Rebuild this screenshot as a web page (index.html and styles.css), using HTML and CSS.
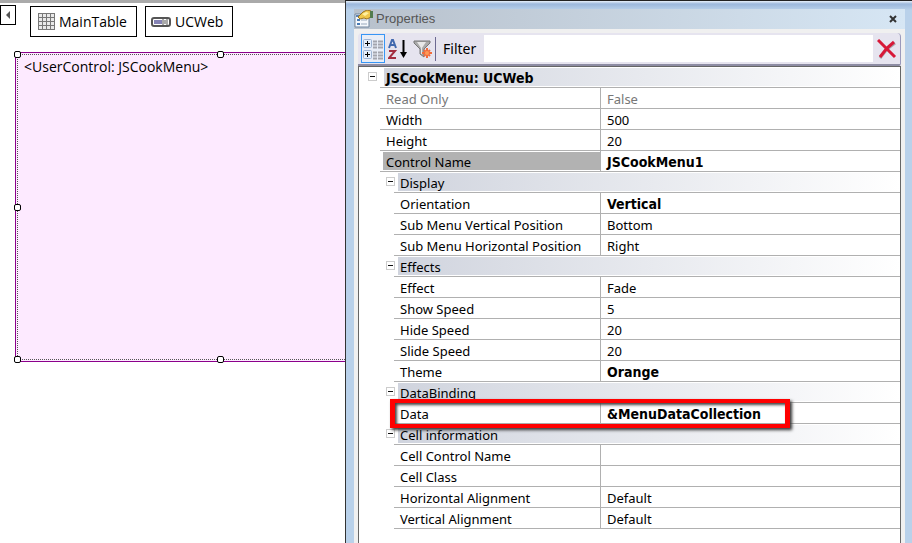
FILE: index.html
```html
<!DOCTYPE html>
<html lang="en">
<head>
<meta charset="utf-8">
<title>Properties</title>
<link rel="stylesheet" href="styles.css">
</head>
<body>
<main class="workspace">
  <section class="designer" aria-label="Form designer">
    <nav class="path">
      <button class="scroll" aria-label="Scroll left"><svg width="6" height="8" viewBox="0 0 6 8"><path d="M5 0v8L1 4z" fill="#555"/></svg></button>
      <button class="crumb">
        <svg width="17" height="17" viewBox="0 0 17 17"><path d="M0 0h17v17H0z" fill="#777"/><path d="M1 1h3v3H1zM5 1h3v3H5zM9 1h3v3H9zM13 1h3v3h-3zM1 5h3v3H1zM5 5h3v3H5zM9 5h3v3H9zM13 5h3v3h-3zM1 9h3v3H1zM5 9h3v3H5zM9 9h3v3H9zM13 9h3v3h-3zM1 13h3v3H1zM5 13h3v3H5zM9 13h3v3H9zM13 13h3v3h-3z" fill="#e9e9e9"/></svg>
        MainTable
      </button>
      <button class="crumb short">
        <svg width="20" height="10" viewBox="0 0 20 10"><rect x="1" y="1" width="18" height="8" rx="2" fill="#fff" stroke="#555" stroke-width="2"/><path d="M3 3h8v4H3z" fill="#8583b5"/><path d="M12 1v8M16 1v8" stroke="#555"/><path d="M13 3h2v4h-2z" fill="#aaa"/></svg>
        UCWeb
      </button>
    </nav>
    <div class="control">
      <div class="control-body">&lt;UserControl: JSCookMenu&gt;</div>
      <i class="handle tl"></i><i class="handle tc"></i><i class="handle ml"></i><i class="handle bl"></i><i class="handle bc"></i>
    </div>
  </section>

  <section class="window" aria-label="Properties">
    <div class="pane">
      <header class="title">
        <svg width="20" height="18" viewBox="0 0 20 18"><path d="M1 4h14v13H1z" fill="#f5f8fc" stroke="#71869f"/><path d="M2 5h8v2H2z" fill="#5982b8"/><path d="M3 9h3v2H3zM3 13h3v2H3z" fill="#497bb4"/><path d="M7 10h6M7 14h6" stroke="#99a9bc"/><path d="M4 7l5-5 4-2 4 1v6l-4 2-3-1-4 1z" fill="#efc74b" stroke="#9b7420"/><path d="M8 4l4-2 3 1-4 3z" fill="#fff0a0"/><path d="M16 1h3v7h-3z" fill="#527c4e"/></svg>
        <h1>Properties</h1>
        <button class="close" aria-label="Close"><svg width="8" height="8" viewBox="0 0 8 8"><path d="M1 1l6 6M7 1L1 7" stroke="#333" stroke-width="2"/></svg></button>
      </header>
      <div class="toolbar">
        <button class="tool active" aria-label="Categorized"><svg width="20" height="22" viewBox="0 0 20 22"><g fill="#e4eefb" stroke="#9db3d3"><rect x=".5" y="1.500" width="8" height="8" rx="1"/><rect x=".5" y="12.500" width="8" height="8" rx="1"/></g><path d="M2 5.500h5M4.500 3v5M2 16.500h5M4.500 14v5" stroke="#000"/><path d="M4 5h1v1H4zM4 16h1v1H4z" stroke="#000"/><path d="M10 3.500h4M10 6.500h4M10 9.500h4M10 14.500h4M10 17.500h4M10 20.500h4M15 3.500h5M15 6.500h5M15 9.500h5M15 14.500h5M15 17.500h5M15 20.500h5" stroke="#a3a5ae" stroke-width="2"/></svg></button>
        <button class="tool" aria-label="Alphabetical"><svg width="20" height="22" viewBox="0 0 20 22"><path d="M1 10L4 2h1l3 8M2 7h5" fill="none" stroke="#4169ae" stroke-width="2"/><path d="M1 13h6L1 20h7" fill="none" stroke="#a32e40" stroke-width="2"/><path d="M15.500 2v14" stroke="#000" stroke-width="2"/><path d="M12 14h7l-3.500 6z"/></svg></button>
        <button class="tool" aria-label="Filter modified"><svg width="20" height="20" viewBox="0 0 20 20"><path d="M1 2h16v2l-6 6v8l-4-3v-5L1 4z" fill="#aaa" stroke="#777"/><path d="M4 3h9L9 9v6H8V9z" fill="#e8e8e8"/><path d="M14 9v10M9 14h10M11 11l6 6M17 11l-6 6" stroke="#f36b3b" stroke-width="2"/><circle cx="14" cy="14" r="2" fill="#ff9a57"/></svg></button>
        <label for="filter">Filter</label>
        <input id="filter" type="text">
        <button class="clear" aria-label="Clear filter"><svg width="20" height="20" viewBox="0 0 20 20"><path d="M3 19L10 10 18 4" fill="none" stroke="#a9a5ad" stroke-width="3"/><path d="M1 1l7 7 10 10M17 3l-7 6-7 9" fill="none" stroke="#d71838" stroke-width="3"/></svg></button>
      </div>
      <div class="grid">
        <table>
          <colgroup><col class="gutter"><col class="indent"><col class="name"><col></colgroup>
          <tbody>
          <tr class="root"><td><button class="toggle" aria-label="Collapse"></button></td><th colspan="3"><div>JSCookMenu: UCWeb</div></th></tr>
          <tr class="top muted"><td></td><th colspan="2">Read Only</th><td>False</td></tr>
          <tr class="top"><td></td><th colspan="2">Width</th><td>500</td></tr>
          <tr class="top"><td></td><th colspan="2">Height</th><td>20</td></tr>
          <tr class="top selected"><td></td><th colspan="2"><div>Control Name</div></th><td class="changed">JSCookMenu1</td></tr>
          <tr class="group"><td></td><td><button class="toggle" aria-label="Collapse"></button></td><th colspan="2"><div>Display</div></th></tr>
          <tr><td></td><td></td><th>Orientation</th><td class="changed">Vertical</td></tr>
          <tr><td></td><td></td><th>Sub Menu Vertical Position</th><td>Bottom</td></tr>
          <tr><td></td><td></td><th>Sub Menu Horizontal Position</th><td>Right</td></tr>
          <tr class="group"><td></td><td><button class="toggle" aria-label="Collapse"></button></td><th colspan="2"><div>Effects</div></th></tr>
          <tr><td></td><td></td><th>Effect</th><td>Fade</td></tr>
          <tr><td></td><td></td><th>Show Speed</th><td>5</td></tr>
          <tr><td></td><td></td><th>Hide Speed</th><td>20</td></tr>
          <tr><td></td><td></td><th>Slide Speed</th><td>20</td></tr>
          <tr><td></td><td></td><th>Theme</th><td class="changed">Orange</td></tr>
          <tr class="group"><td></td><td><button class="toggle" aria-label="Collapse"></button></td><th colspan="2"><div>DataBinding</div></th></tr>
          <tr><td></td><td></td><th class="marked">Data<span class="callout"></span></th><td class="changed">&amp;MenuDataCollection</td></tr>
          <tr class="group"><td></td><td><button class="toggle" aria-label="Collapse"></button></td><th colspan="2"><div>Cell information</div></th></tr>
          <tr><td></td><td></td><th>Cell Control Name</th><td></td></tr>
          <tr><td></td><td></td><th>Cell Class</th><td></td></tr>
          <tr><td></td><td></td><th>Horizontal Alignment</th><td>Default</td></tr>
          <tr><td></td><td></td><th>Vertical Alignment</th><td>Default</td></tr>
          </tbody>
        </table>
      </div>
    </div>
  </section>
</main>
</body>
</html>
```
FILE: styles.css
```css
* { box-sizing: border-box; }
body { margin: 0; background: #fff; color: #000; font: 13px/18px "Noto Sans", "Open Sans", sans-serif; }
button { margin: 0; padding: 0; border: 0; background: none; color: inherit; font: inherit; }
svg { display: block; flex: none; }

.workspace { display: grid; grid-template-columns: 345px 1fr; min-height: 100vh; }

.designer { border-top: 3px solid #aaa; font: 14px/20px "Open Sans", "Noto Sans", sans-serif; overflow: hidden; }
.path { display: flex; align-items: flex-start; padding-top: 2px; }
.scroll { width: 16px; height: 20px; border: 1px solid #000; margin-right: 14px; display: flex; align-items: center; justify-content: center; }
.crumb { display: flex; align-items: center; gap: 4px; height: 31px; margin: 1px 8px 0 0; padding: 0 9px 0 7px; border: 1px solid #000; }
.crumb.short { padding-left: 5px; }
.control { position: relative; height: 310px; margin: 15px 0 0 15px; border: 1px solid #8b008b; border-right: 0; padding: 1px 0 1px 1px; background: #fdeaff; }
.control-body { height: 100%; border: 1px dotted #555; border-right: 0; padding: 2px 6px; }
.handle { position: absolute; width: 7px; height: 7px; border: 1px solid #000; border-radius: 2px; background: #fff; }
.tl, .tc { top: -2px; }
.bl, .bc { bottom: -2px; }
.tl, .ml, .bl { left: -2px; }
.tc, .bc { left: 201px; }
.ml { top: 151px; }

.window { display: flex; border-top: 1px solid #222; border-left: 1px solid #333; padding: 8px 7px 0 8px; background: linear-gradient(#e8f1fb, #9cb8dc 3px, #b9d1ea 9px); }
.pane { flex: 1; display: flex; flex-direction: column; min-width: 0; background: #f0f0f0; }
.title { display: flex; align-items: center; gap: 2px; height: 20px; padding-right: 8px; background: linear-gradient(90deg, #b8c1cc, #d6e6f4); color: #555; }
.title h1 { margin: 0; flex: 1; font: 13px/20px "Liberation Sans", sans-serif; }
.toolbar { display: flex; align-items: center; height: 33px; margin: 4px 4px 0; border-right: 1px solid #9a99bb; border-bottom: 2px solid #8d8ca3; border-radius: 4px 4px 2px 0; padding: 0 3px; background: #e6e4ef; font-size: 14px; }
.tool { width: 25px; height: 29px; display: flex; align-items: center; justify-content: center; }
.tool.active { width: 24px; border: 1px solid #3796f5; background: #e8edf7; }
.toolbar label { padding: 3px 8px 3px 7px; border-left: 1px solid #6c6991; }
.toolbar input { flex: 1; min-width: 0; height: 27px; border: 0; padding: 0 4px; background: #fff; font: inherit; }
.clear { margin-left: 4px; }

.grid { flex: 1; margin: 0 4px; border: 1px solid #666; border-bottom: 0; background: #fff; }
table { width: 100%; table-layout: fixed; border-spacing: 0; }
.gutter { width: 21px; }
.indent { width: 14px; }
.name { width: 206px; }
td, th { height: 21px; padding: 2px 6px 0; border-bottom: 1px solid #b0b0b0; font-weight: 400; text-align: left; white-space: nowrap; }
td:first-child, tr:not(.top) td:nth-child(2) { padding: 0; border-bottom: 0; }
td:last-child { border-left: 1px solid #b0b0b0; }
.changed, .root th { font: 700 14px/18px "DejaVu Sans Condensed", sans-serif; }
.muted { color: #777; }
.root th, .group th { padding: 0 0 0 4px; }
.root div, .group div { height: 18px; padding-left: 2px; line-height: 20px; background: linear-gradient(90deg, #d0d4de, #fff); }
.selected th { padding: 0 0 0 3px; }
.selected div { height: 18px; padding-left: 3px; line-height: 20px; background: #b2b2b2; }
.toggle { display: block; width: 9px; height: 9px; margin: 0 0 3px 9px; border: 1px solid #ccc; background: linear-gradient(#111, #111) center / 5px 1px no-repeat #fff; }
.group .toggle { margin-left: 6px; }
.marked { position: relative; }
.callout { position: absolute; z-index: 1; top: -4px; left: -4px; width: 400px; height: 29px; border: 5px solid #f00; border-width: 4px 5px; box-shadow: 2px 2px 3px #333, inset 2px 2px 3px #444; }
```
